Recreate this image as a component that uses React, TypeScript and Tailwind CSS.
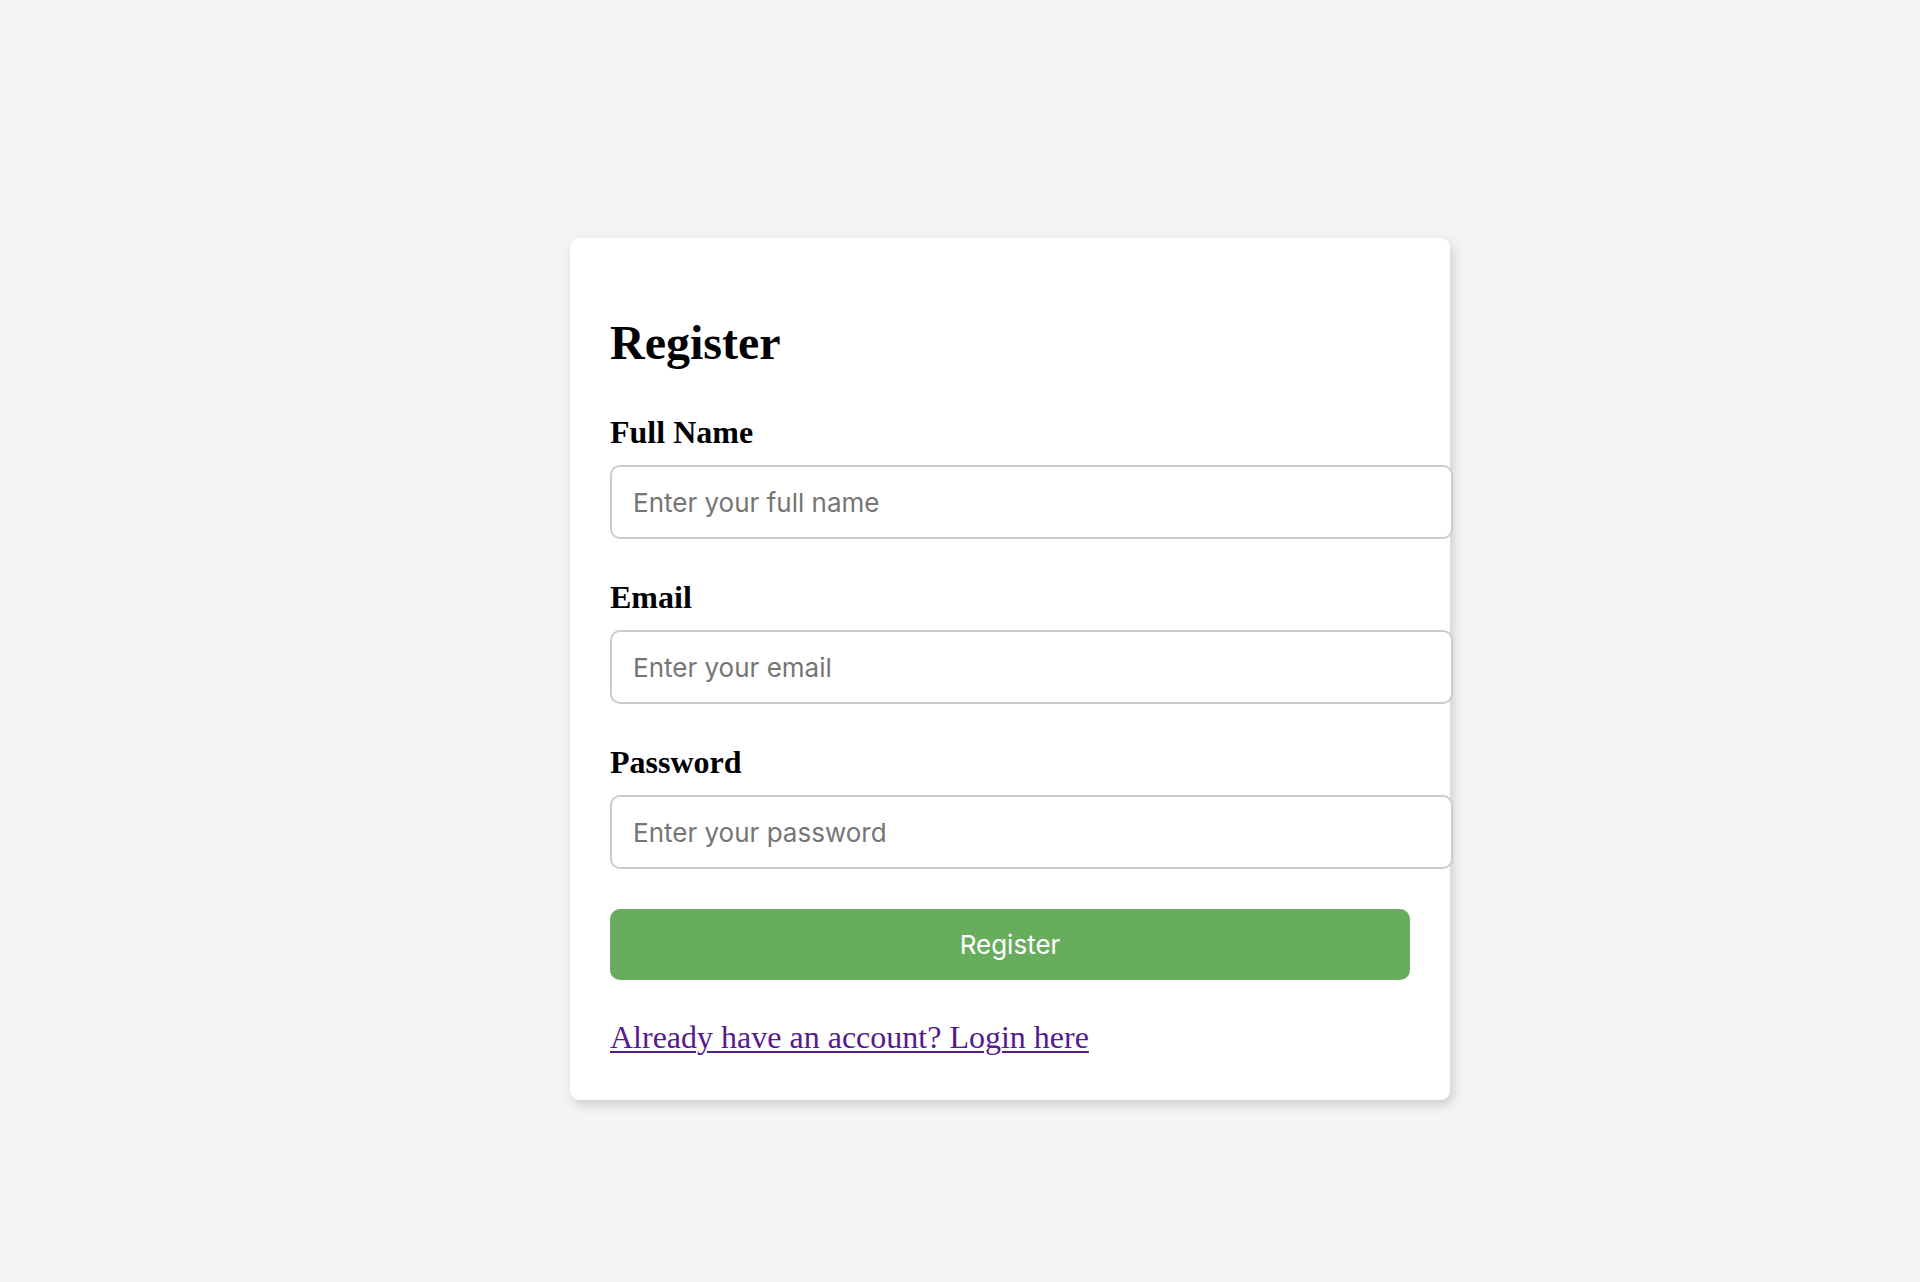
import React from "react";

const serif = "font-['Liberation_Serif','Times_New_Roman',serif]";

function Field({ label, placeholder, type }: { label: string; placeholder: string; type: string }) {
  return (
    <div className="mb-[40px]">
      <label className={`block ${serif} font-bold text-[32px] leading-[37px] text-black mb-[14px]`}>{label}</label>
      <input
        type={type}
        placeholder={placeholder}
        className="block w-[843px] h-[74px] border-2 border-[#cccccc] rounded-[10px] pl-[21px] pr-[21px] bg-white font-['Inter','Liberation_Sans',sans-serif] text-[26px] text-black placeholder:text-[#757575] outline-none"
      />
    </div>
  );
}

export default function App() {
  return (
    <div className="min-h-[1282px] w-full bg-[#f4f4f4] overflow-hidden">
      <div className="ml-[570px] mt-[238px] w-[880px] bg-white rounded-[9px] shadow-[3px_5px_12px_rgba(0,0,0,0.16)] pt-[77px] pl-[40px] pr-[40px] pb-[39px]">
        <h2 className={`${serif} font-bold text-[48px] leading-[55px] text-black mb-[44px]`}>Register</h2>
        <Field label="Full Name" placeholder="Enter your full name" type="text" />
        <Field label="Email" placeholder="Enter your email" type="email" />
        <Field label="Password" placeholder="Enter your password" type="password" />
        <button className="mt-[1px] block w-[800px] h-[71px] rounded-[10px] bg-[#68ad5e] text-white font-['Inter','Liberation_Sans',sans-serif] text-[26px]">
          Register
        </button>
        <div className="mt-[39px] leading-[37px]">
          <a href="#" className={`${serif} text-[32px] leading-[37px] text-[#551a8b] underline decoration-[2px] underline-offset-[3px]`}>
            Already have an account? Login here
          </a>
        </div>
      </div>
    </div>
  );
}
